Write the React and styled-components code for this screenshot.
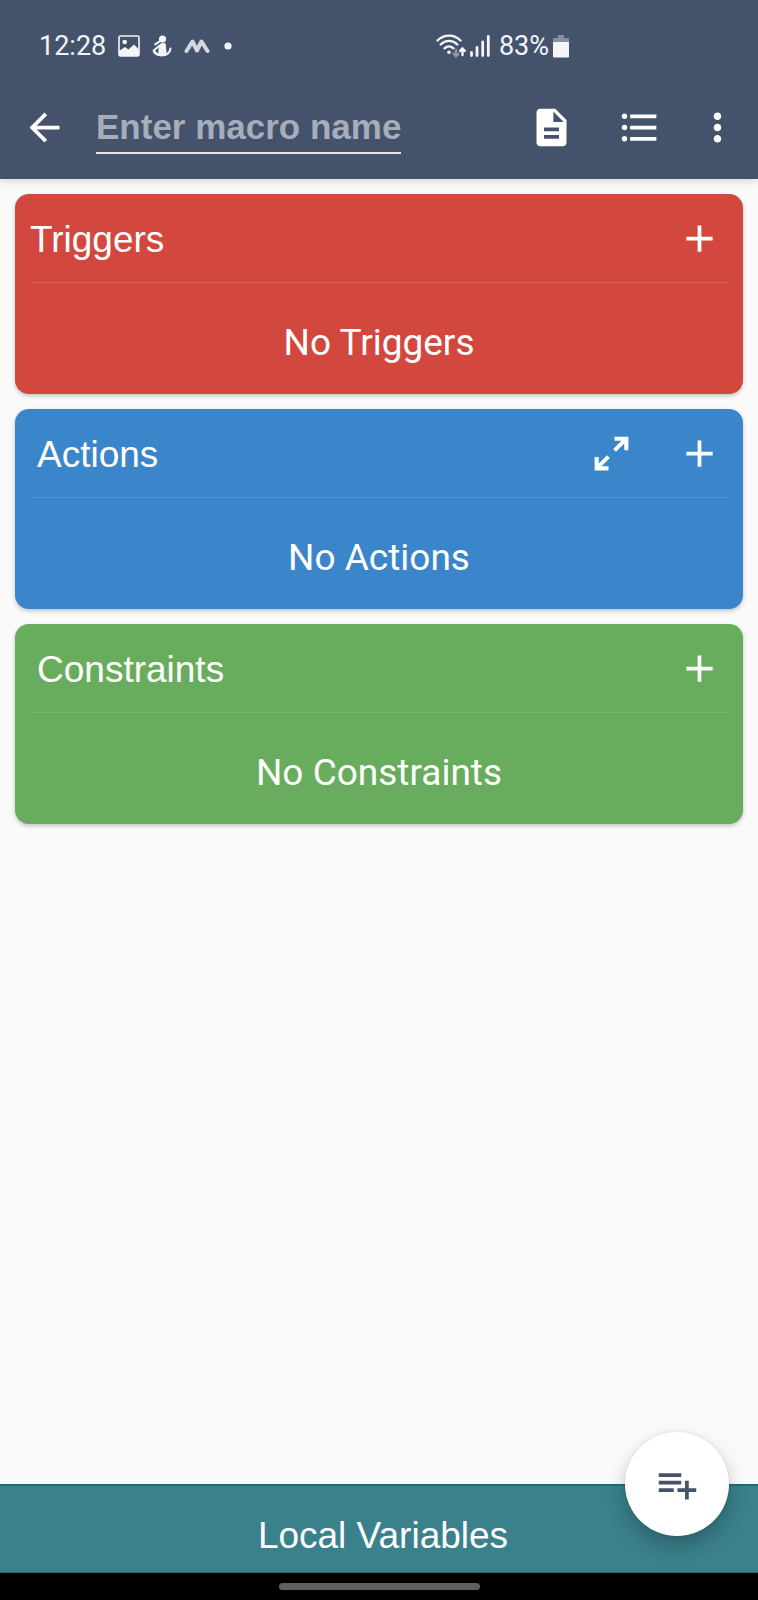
import React, { useState } from 'react'
import styled, { createGlobalStyle } from 'styled-components'

const GlobalStyle = createGlobalStyle`
    * {
        box-sizing: border-box;
    }
    body {
        margin: 0;
        background: #fafafa;
        font-family: "Liberation Sans", Arial, sans-serif;
    }
    button, input {
        font-family: inherit;
    }
`

const Page = styled.div`
    display: flex;
    flex-direction: column;
    min-height: 100vh;
`

const Header = styled.header`
    background: #44526b;
    color: #fff;
    box-shadow: 0 2px 8px rgba(0, 0, 0, 0.16);
`

const StatusBar = styled.div`
    display: flex;
    justify-content: space-between;
    align-items: center;
    height: 76px;
    padding: 16px 189px 0 39px;
    color: #f3f5f7;
    font-family: Roboto, sans-serif;
    font-size: 27px;
    line-height: 32px;
`

const StatusGroup = styled.div`
    display: flex;
    align-items: center;
    gap: ${({ $gap }) => $gap}px;
`

const BatteryLevel = styled.span`
    margin-left: 5px;
`

const Toolbar = styled.div`
    display: flex;
    align-items: center;
    height: 103px;
    padding-right: 7px;
`

const IconButton = styled.button`
    display: flex;
    flex: none;
    align-items: center;
    justify-content: center;
    width: ${({ $width }) => $width || 88}px;
    height: 88px;
    padding: 0;
    border: 0;
    background: none;
    color: inherit;
    cursor: pointer;
`

const NameField = styled.div`
    flex: 1;
    min-width: 0;
    padding-left: 8px;
`

const NameInput = styled.input`
    display: block;
    field-sizing: content;
    max-width: 100%;
    height: 53px;
    padding: 0;
    border: 0;
    border-bottom: 2px solid #e3e5e6;
    border-radius: 0;
    outline: 0;
    background: none;
    color: #fff;
    font-size: 35px;
    font-weight: bold;
    &::placeholder {
        color: #a6adbb;
        opacity: 1;
    }
`

const Main = styled.main`
    display: flex;
    flex: 1;
    flex-direction: column;
    gap: 15px;
    padding: 15px;
`

const Card = styled.section`
    border-radius: 14px;
    background: ${({ $color }) => $color};
    color: #fff;
    box-shadow: 0 2px 4px rgba(0, 0, 0, 0.22);
`

const CardHeader = styled.div`
    display: flex;
    align-items: center;
    height: 88px;
    padding-left: ${({ $inset }) => $inset}px;
`

const CardTitle = styled.h2`
    flex: 1;
    margin: 0;
    padding-top: 4px;
    font-size: 37px;
    font-weight: normal;
    line-height: 44px;
`

const Divider = styled.hr`
    height: 1px;
    margin: 0 15px;
    border: 0;
    background: rgba(255, 255, 255, 0.13);
`

const EmptyText = styled.p`
    margin: 0;
    padding: 38px 15px 29px;
    font-family: Roboto, sans-serif;
    font-size: 37px;
    line-height: 44px;
    text-align: center;
`

const Footer = styled.footer`
    position: relative;
`

const VariablesButton = styled.button`
    display: block;
    width: 100%;
    height: 89px;
    padding: 14px 0 0 8px;
    border: 0;
    border-top: 2px solid #2b6770;
    border-bottom: 1px solid #2b6770;
    background: #3a818c;
    color: #fff;
    font-size: 37px;
    line-height: 44px;
    cursor: pointer;
`

const Fab = styled.button`
    position: absolute;
    top: -52px;
    right: 29px;
    display: flex;
    align-items: center;
    justify-content: center;
    width: 104px;
    height: 104px;
    padding: 0;
    border: 0;
    border-radius: 50%;
    background: #fff;
    color: #44526b;
    box-shadow: 0 10px 20px rgba(0, 0, 0, 0.24), 0 0 4px rgba(0, 0, 0, 0.08);
    cursor: pointer;
`

const NavigationBar = styled.div`
    display: flex;
    align-items: center;
    justify-content: center;
    height: 27px;
    background: #000;
`

const HomeHandle = styled.div`
    width: 201px;
    height: 7px;
    border-radius: 4px;
    background: #606060;
`

const paths = {
    back: 'M20 11H7.83l5.59-5.59L12 4l-8 8 8 8 1.41-1.41L7.83 13H20v-2z',
    log: 'M14 2H6c-1.1 0-1.99.9-1.99 2L4 20c0 1.1.89 2 1.99 2H18c1.1 0 2-.9 2-2V8l-6-6zm2 16H8v-2h8v2zm0-4H8v-2h8v2zm-3-5V3.5L18.5 9H13z',
    list: 'M4 10.5c-.83 0-1.5.67-1.5 1.5s.67 1.5 1.5 1.5 1.5-.67 1.5-1.5-.67-1.5-1.5-1.5zm0-6c-.83 0-1.5.67-1.5 1.5S3.17 7.5 4 7.5 5.5 6.83 5.5 6 4.83 4.5 4 4.5zm0 12c-.83 0-1.5.68-1.5 1.5s.68 1.5 1.5 1.5 1.5-.68 1.5-1.5-.67-1.5-1.5-1.5zM7 19h14v-2H7v2zm0-6h14v-2H7v2zm0-8v2h14V5H7z',
    more: 'M12 8c1.1 0 2-.9 2-2s-.9-2-2-2-2 .9-2 2 .9 2 2 2zm0 2c-1.1 0-2 .9-2 2s.9 2 2 2 2-.9 2-2-.9-2-2-2zm0 6c-1.1 0-2 .9-2 2s.9 2 2 2 2-.9 2-2-.9-2-2-2z',
    add: 'M19 13h-6v6h-2v-6H5v-2h6V5h2v6h6v2z',
    expand: 'M13.6 3H21v7.2h-2.2V6.7l-4.4 4.4-1.5-1.5 4.4-4.4h-3.7zM3 13.8h2.2v3.5l4.4-4.4 1.5 1.5-4.4 4.4h3.7V21H3z',
    playlistAdd: 'M14 10H2v2h12v-2zm0-4H2v2h12V6zm4 8v-4h-2v4h-4v2h4v4h2v-4h4v-2h-4zM2 16h8v-2H2v2z',
}

const Icon = ({ name }) => (
    <svg width="45" height="45" viewBox="0 0 24 24" fill="currentColor" aria-hidden="true">
        <path d={paths[name]} />
    </svg>
)

const PictureIcon = () => (
    <svg width="22" height="22" viewBox="0 0 22 22" aria-hidden="true">
        <rect x="1" y="1" width="20" height="20" rx="1.5" fill="none" stroke="currentColor" strokeWidth="1.6" />
        <circle cx="6.7" cy="7" r="2.3" fill="currentColor" />
        <path d="M1 16l6-4 3.5 2.5 5.5-5 5 5V21H1z" fill="currentColor" />
    </svg>
)

const FigureIcon = () => (
    <svg width="20" height="22" viewBox="0 0 20 22" fill="currentColor" aria-hidden="true">
        <circle cx="10.5" cy="4" r="3.6" />
        <path d="M7.5 9.5C10 7 13.5 7.5 14 10c.3 2-.4 3 .3 5 .5 2 0 4.5-1.3 6H5.5C7.5 17 5.5 12 7.5 9.5z" />
        <path d="M8 6.2L3.2 9.3M7 11l-5.5 4.7L5 18.8" fill="none" stroke="currentColor" strokeWidth="2" strokeLinecap="round" strokeLinejoin="round" />
        <path d="M2 17c3 4.5 15 5.5 16.5-3.5" fill="none" stroke="currentColor" strokeWidth="2" strokeLinecap="round" />
    </svg>
)

const ZigzagIcon = () => (
    <svg width="26" height="16" viewBox="0 0 26 16" fill="none" stroke="#d4d8dd" strokeWidth="4" strokeLinecap="round" strokeLinejoin="round" aria-hidden="true">
        <path d="M2.5 13L8.5 3.5l4.5 9 4.5-9 6 9.5" />
    </svg>
)

const DotIcon = () => (
    <svg width="12" height="8" viewBox="0 0 12 8" aria-hidden="true">
        <circle cx="6" cy="4" r="3.6" fill="currentColor" />
    </svg>
)

const WifiIcon = () => (
    <svg width="30" height="24" viewBox="0 0 30 24" fill="none" stroke="currentColor" strokeWidth="2.4" strokeLinecap="round" aria-hidden="true">
        <path d="M1.5 6.5C8 0 18 0 24.5 6.5M4.7 10.5C9.5 5.7 16.500 5.7 21.3 10.5M8.5 14.3c2.700-2.5 6.300-2.5 9 0" />
        <circle cx="13" cy="18.3" r="1.8" fill="currentColor" stroke="none" />
        <path d="M20 16v6M17.7 19.8l2.3 2.4 2.3-2.4" stroke="#8d96a5" />
        <path d="M26.5 21v-6M24.2 16.8l2.3-2.4 2.3 2.4" />
    </svg>
)

const SignalIcon = () => (
    <svg width="20" height="22" viewBox="0 0 20 22" fill="none" stroke="currentColor" strokeWidth="2.8" strokeLinecap="round" aria-hidden="true">
        <path d="M1.5 20.5v-3M7 20.5v-8M12.7 20.5V7M18.3 20.5v-19" />
    </svg>
)

const BatteryIcon = () => (
    <svg width="16" height="23" viewBox="0 0 16 23" aria-hidden="true">
        <path d="M5 0h6v3h4a1 1 0 0 1 1 1v3H0V4a1 1 0 0 1 1-1h4z" fill="#8791a1" />
        <path d="M0 7h16v14.5a1 1 0 0 1-1 1H1a1 1 0 0 1-1-1z" fill="currentColor" />
    </svg>
)

const sections = [
    { title: 'Triggers', color: '#d2483e', inset: 15 },
    { title: 'Actions', color: '#3b86ca', inset: 22, expandable: true },
    { title: 'Constraints', color: '#68ad5d', inset: 22 },
]

const MacroSection = ({ title, color, inset, expandable }) => (
    <Card $color={color}>
        <CardHeader $inset={inset}>
            <CardTitle>{title}</CardTitle>
            {expandable &&
                <IconButton type="button" aria-label={`Expand ${title}`}>
                    <Icon name="expand" />
                </IconButton>
            }
            <IconButton type="button" aria-label={`Add ${title}`}>
                <Icon name="add" />
            </IconButton>
        </CardHeader>
        <Divider />
        <EmptyText>No {title}</EmptyText>
    </Card>
)

const App = () => {
    const [macroName, setMacroName] = useState('')

    return (
        <Page>
            <GlobalStyle />
            <Header>
                <StatusBar>
                    <StatusGroup $gap={12}>
                        <span>12:28</span>
                        <PictureIcon />
                        <FigureIcon />
                        <ZigzagIcon />
                        <DotIcon />
                    </StatusGroup>
                    <StatusGroup $gap={4}>
                        <WifiIcon />
                        <SignalIcon />
                        <BatteryLevel>83%</BatteryLevel>
                        <BatteryIcon />
                    </StatusGroup>
                </StatusBar>
                <Toolbar>
                    <IconButton type="button" aria-label="Back">
                        <Icon name="back" />
                    </IconButton>
                    <NameField>
                        <NameInput
                            type="text"
                            name="macroName"
                            aria-label="Macro name"
                            placeholder="Enter macro name"
                            value={macroName}
                            onChange={(e) => setMacroName(e.target.value)}
                        />
                    </NameField>
                    <IconButton type="button" aria-label="Log">
                        <Icon name="log" />
                    </IconButton>
                    <IconButton type="button" aria-label="List">
                        <Icon name="list" />
                    </IconButton>
                    <IconButton type="button" $width={68} aria-label="More options">
                        <Icon name="more" />
                    </IconButton>
                </Toolbar>
            </Header>
            <Main>
                {sections.map((section) => <MacroSection key={section.title} {...section} />)}
            </Main>
            <Footer>
                <VariablesButton type="button">Local Variables</VariablesButton>
                <Fab type="button" aria-label="Add block">
                    <Icon name="playlistAdd" />
                </Fab>
                <NavigationBar>
                    <HomeHandle />
                </NavigationBar>
            </Footer>
        </Page>
    )
}

export default App
